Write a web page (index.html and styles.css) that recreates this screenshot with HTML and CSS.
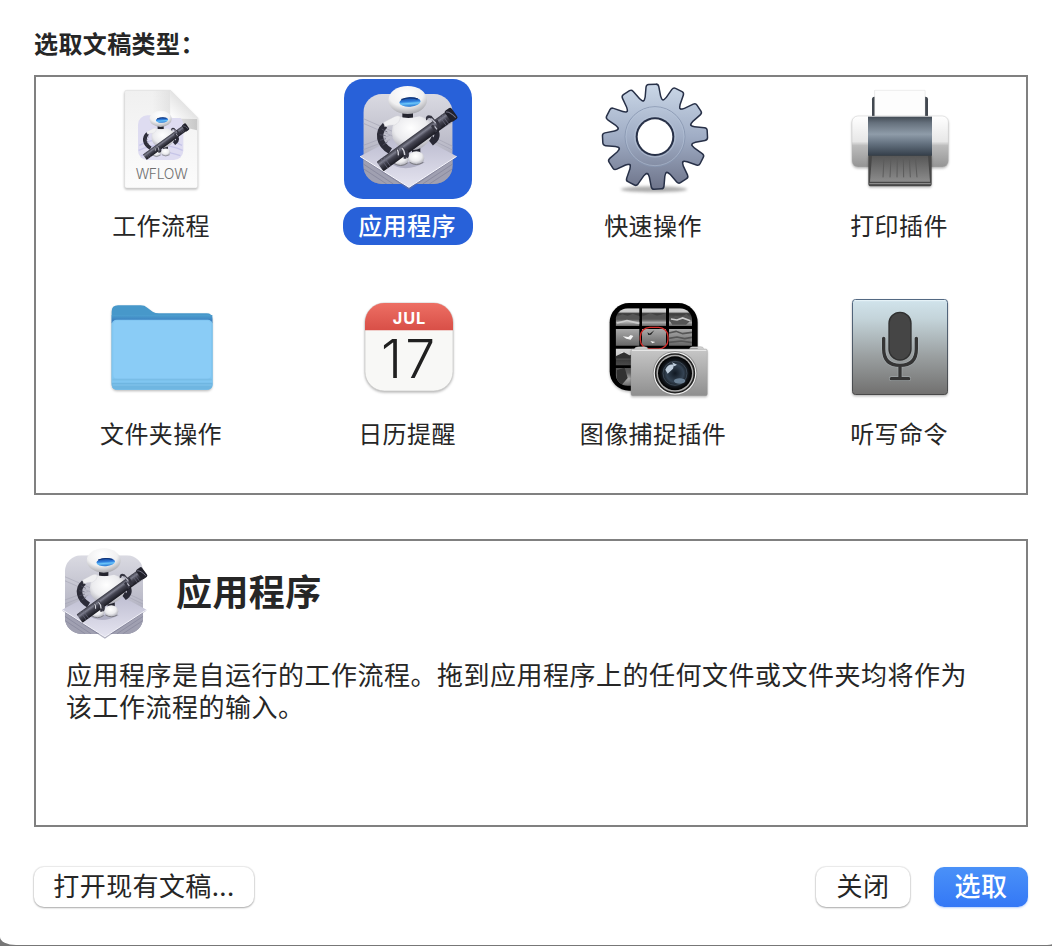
FILE: index.html
```html
<!DOCTYPE html>
<html lang="zh-CN">
<head>
<meta charset="utf-8">
<title>选取文稿类型</title>
<link rel="stylesheet" href="styles.css">
</head>
<body>
<svg class="defs" width="0" height="0" aria-hidden="true">
  <defs>
    <radialGradient id="head" cx=".45" cy=".28" r=".75"><stop offset="0" stop-color="#fff"/><stop offset=".6" stop-color="#f0f0f1"/><stop offset="1" stop-color="#a2a2a8"/></radialGradient>
    <radialGradient id="torso" cx=".45" cy=".35" r=".65"><stop offset="0" stop-color="#fff"/><stop offset=".6" stop-color="#ebebee"/><stop offset="1" stop-color="#adadb6"/></radialGradient>
    <linearGradient id="eye" x1="0" y1="0" x2="0" y2="1"><stop offset="0" stop-color="#14439c"/><stop offset=".45" stop-color="#2f80e0"/><stop offset=".65" stop-color="#6cc6fa"/><stop offset="1" stop-color="#2372cf"/></linearGradient>
    <linearGradient id="tube" x1="0" y1="0" x2="0" y2="1"><stop offset="0" stop-color="#34343f"/><stop offset=".28" stop-color="#7d7e8d"/><stop offset=".5" stop-color="#454552"/><stop offset="1" stop-color="#191921"/></linearGradient>
    <linearGradient id="room" x1="0" y1="0" x2="0" y2="1"><stop offset="0" stop-color="#dadae2"/><stop offset=".6" stop-color="#b9b9c7"/><stop offset="1" stop-color="#85859a"/></linearGradient>
    <linearGradient id="floor" x1="0" y1="0" x2="0" y2="1"><stop offset="0" stop-color="#b6b6cb"/><stop offset="1" stop-color="#e5e4f0"/></linearGradient>
    <clipPath id="roomClip"><rect x="100" y="72" width="268" height="270" rx="56"/></clipPath>
    <symbol id="figure" viewBox="0 0 480 400" overflow="visible">
      <path d="M217 122h32v22h-32z" fill="#24242e"/>
      <path d="M165 166C141 188 146 222 181 243" fill="none" stroke="#2c2c38" stroke-width="19"/>
      <path d="M155 177l17 9M149 194l18 3M150 211l18-5M158 226l15-11" stroke="#555566" stroke-width="2"/>
      <path d="M310 170q22 28 0 45l-16-20" fill="none" stroke="#292935" stroke-width="16"/>
      <path d="M207 233h27v26h-27zM246 232h25v25h-25z" fill="#262631"/>
      <ellipse cx="211" cy="267" rx="25" ry="20" fill="url(#torso)"/>
      <ellipse cx="259" cy="264" rx="24" ry="20" fill="url(#torso)"/>
      <path d="M190 279q22 15 43 0M239 277q20 13 41 0" fill="none" stroke="#77777f" stroke-width="3"/>
      <path d="M205 139q28 10 64 0 40 11 43 43-17 53-62 58-46 2-62-36-9-38 17-65z" fill="url(#torso)"/>
      <path d="M161 157l32-17q11-5 18 0-1 18-17 25-17-1-30 5z" fill="#f0f0f2" stroke="#c7c7ce"/>
      <ellipse cx="233" cy="90" rx="58" ry="42" fill="url(#head)"/>
      <ellipse cx="240" cy="96" rx="32" ry="14" fill="url(#eye)" transform="rotate(-4 240 96)"/>
      <path d="M214 89q22-10 49-2" fill="none" stroke="#123576" stroke-width="4"/>
      <g transform="rotate(-36 258 212)">
        <rect x="125" y="194" width="272" height="35" rx="3" fill="url(#tube)"/>
        <path d="M141 194v35M151 194v35M358 194v35M367 194v35" stroke="#6c6c80" stroke-width="2"/>
        <rect x="377" y="191" width="24" height="40" rx="6" fill="#21212b"/>
        <path d="M381 195q11 5 14 31" fill="none" stroke="#747486" stroke-width="3"/>
      </g>
      <path d="M202 238q4 10 1 24M215 232q10 10 10 34M225 240q13 9 5 23" fill="none" stroke="#373743" stroke-width="8"/>
      <path d="M202 239q4 7 3 17M215 233q9 8 9 22" fill="none" stroke="#d4d4dc" stroke-width="4"/>
      <path d="M292 150q-3-13 10-9l14 16M319 151l12 23M306 166l14 20" fill="none" stroke="#343440" stroke-width="8"/>
      <path d="M292 148l13-1 12 12M314 169l7 9" fill="none" stroke="#bdbdc9" stroke-width="4"/>
    </symbol>
    <symbol id="automator" viewBox="42 27 384 360">
      <g clip-path="url(#roomClip)">
        <path d="M100 72h268v270H100z" fill="url(#room)"/>
        <path d="M100 146l110 48M100 160l110 48M100 226l80-30M100 239l80-30M368 142l-80 50M368 156l-80 50M368 229l-70-34M368 240l-70-34" stroke="#a3a3b4" stroke-width="2"/>
        <path d="M100 264L235 354 368 264V342H100z" fill="#a0a0b1"/>
        <path d="M100 282L190 342M100 296L170 342M368 282L278 342M368 296L298 342" stroke="#818197" stroke-width="2"/>
      </g>
      <path d="M90 262L236 185 380 262 237 359z" fill="#73738e" opacity=".55"/>
      <path d="M90 259L236 182 380 259 237 352z" fill="url(#floor)"/>
      <path d="M90 259L237 352 380 259" fill="none" stroke="#fafaff" stroke-width="3"/>
      <path d="M175 275q46 38 110 2" fill="#9292aa" opacity=".55"/>
      <use href="#figure" width="480" height="400"/>
    </symbol>
  </defs>
</svg>

<main class="window">
  <h1 class="heading">选取文稿类型：</h1>

  <section class="types">
    <div class="type">
      <svg class="icon" viewBox="0 0 384 360">
        <defs>
          <linearGradient id="paper" x1="0" y1="0" x2="0" y2="1"><stop offset="0" stop-color="#f0f0f0"/><stop offset="1" stop-color="#fcfcfc"/></linearGradient>
          <linearGradient id="shade" x1="0" y1="0" x2="1" y2="0"><stop offset="0" stop-color="#bbb" stop-opacity="0"/><stop offset="1" stop-color="#aaa" stop-opacity=".6"/></linearGradient>
          <linearGradient id="fold" x1="0" y1="1" x2="1" y2="0"><stop offset="0" stop-color="#fff"/><stop offset=".5" stop-color="#e4e4e4"/><stop offset="1" stop-color="#ccc"/></linearGradient>
        </defs>
        <g transform="translate(-27 -27)">
          <path class="soft-shadow" d="M113 61H244L326 144V348q0 6-6 6H113q-6 0-6-6V67q0-6 6-6z" fill="url(#paper)" stroke="#d8d8d8" stroke-width="1.5"/>
          <path d="M190 62h54v84h80v35L190 150z" fill="url(#shade)"/>
          <rect x="147" y="136" width="136" height="134" rx="28" fill="#dedcf1"/>
          <path d="M151 226q63-34 128 0M149 241q65-30 132 0M157 257q57-23 117 0" fill="none" stroke="#c6c5e8" stroke-width="4"/>
          <path d="M244 61L326 144H252q-8 0-8-8z" fill="url(#fold)"/>
          <use href="#figure" width="480" height="400" transform="translate(81 95) scale(.575)"/>
          <text class="file-ext" x="218" y="328" textLength="156">WFLOW</text>
        </g>
      </svg>
      <span class="label">工作流程</span>
    </div>

    <div class="type selected">
      <svg class="icon"><use href="#automator"/></svg>
      <span class="label">应用程序</span>
    </div>

    <div class="type">
      <svg class="icon" viewBox="0 0 384 360">
        <defs>
          <linearGradient id="steel" x1="0" y1="0" x2="0" y2="1"><stop offset="0" stop-color="#cbd8e8"/><stop offset=".5" stop-color="#a0adc5"/><stop offset="1" stop-color="#6d7389"/></linearGradient>
          <path id="tooth" d="M-31-100Q-22-112-21-120L-17-149Q-16-155-11-155H11Q16-155 17-149L21-120Q22-112 31-100z"/>
          <g id="gearShape">
            <circle r="111"/>
            <use href="#tooth" transform="rotate(-3)"/><use href="#tooth" transform="rotate(27)"/><use href="#tooth" transform="rotate(57)"/><use href="#tooth" transform="rotate(87)"/><use href="#tooth" transform="rotate(117)"/><use href="#tooth" transform="rotate(147)"/><use href="#tooth" transform="rotate(177)"/><use href="#tooth" transform="rotate(207)"/><use href="#tooth" transform="rotate(237)"/><use href="#tooth" transform="rotate(267)"/><use href="#tooth" transform="rotate(297)"/><use href="#tooth" transform="rotate(327)"/>
          </g>
          <mask id="gearOuter" maskUnits="userSpaceOnUse" x="-170" y="-170" width="340" height="340"><use href="#gearShape" fill="#fff" stroke="#fff" stroke-width="9"/><circle r="52" fill="#000"/></mask>
          <mask id="gearInner" maskUnits="userSpaceOnUse" x="-170" y="-170" width="340" height="340"><use href="#gearShape" fill="#fff"/><circle r="58" fill="#000"/></mask>
        </defs>
        <ellipse class="blur" cx="192" cy="331" rx="100" ry="9" fill="#777" opacity=".6"/>
        <g transform="translate(195 173)">
          <rect x="-170" y="-170" width="340" height="340" fill="#273047" mask="url(#gearOuter)"/>
          <rect x="-160" y="-160" width="320" height="320" fill="url(#steel)" mask="url(#gearInner)"/>
          <circle r="90" fill="none" stroke="#8795b0" stroke-width="2.5"/>
          <circle r="87" fill="none" stroke="#b9c7db" stroke-width="1.5"/>
          <circle r="61" fill="none" stroke="#bac7d9" stroke-width="2"/>
        </g>
      </svg>
      <span class="label">快速操作</span>
    </div>

    <div class="type">
      <svg class="icon" viewBox="0 0 384 360">
        <defs>
          <linearGradient id="shell" x1="0" y1="0" x2="0" y2="1"><stop offset="0" stop-color="#fff"/><stop offset=".5" stop-color="#e7e7e7"/><stop offset=".58" stop-color="#bcbcbc"/><stop offset="1" stop-color="#949494"/></linearGradient>
          <linearGradient id="drum" x1="0" y1="0" x2="0" y2="1"><stop offset="0" stop-color="#424b55"/><stop offset=".16" stop-color="#66717d"/><stop offset=".45" stop-color="#8f9ca9"/><stop offset=".7" stop-color="#63707e"/><stop offset="1" stop-color="#343e49"/></linearGradient>
          <linearGradient id="tray" x1="0" y1="0" x2="0" y2="1"><stop offset="0" stop-color="#575757"/><stop offset="1" stop-color="#8c8c8c"/></linearGradient>
        </defs>
        <g transform="translate(12 3)">
          <path d="M96 58q0-8 7-8h153q8 0 8 8v55H96z" fill="#424850"/>
          <path class="paper-sheet" d="M104 31H255V111H104z" fill="#fdfdfd" stroke="#dedede"/>
          <rect class="soft-shadow" x="36" y="108" width="289" height="153" rx="18" fill="url(#shell)" stroke="#b6b6b6" stroke-width="1"/>
          <path class="soft-shadow" d="M85 225H275V311q0 8-8 8H93q-8 0-8-8z" fill="#484848"/>
          <path d="M96 228H264L270 305H90z" fill="url(#tray)"/>
          <path d="M132 230L129 292M153 230L150 292M172 230L171 292M190 230L191 292M208 230L211 292M226 230L231 292" stroke="#5c5c5c" stroke-width="3"/>
          <path d="M88 311H272" stroke="#999" stroke-width="3"/>
          <rect x="84" y="110" width="192" height="117" fill="url(#drum)"/>
        </g>
      </svg>
      <span class="label">打印插件</span>
    </div>

    <div class="type">
      <svg class="icon" viewBox="0 0 384 360">
        <defs>
          <linearGradient id="folderBack" x1="0" y1="0" x2="0" y2="1"><stop offset="0" stop-color="#4c9fcf"/><stop offset="1" stop-color="#3470b8"/></linearGradient>
        </defs>
        <g transform="translate(-9 9)">
          <path class="soft-shadow" d="M50 65q0-19 19-19h68q12 0 20 7l16 12q8 5 19 5h143q17 0 17 17V282q0 17-17 17H66q-16 0-16-17z" fill="#4798ca"/>
          <path d="M50 75H352V100H50z" fill="url(#folderBack)"/>
          <rect x="50" y="89" width="303" height="210" rx="15" fill="#80c6f1"/>
          <rect x="55" y="92" width="293" height="174" rx="12" fill="#8accf6"/>
          <path d="M52 269H351" stroke="#79bde7" stroke-width="5"/>
          <path d="M51 278H352V284q0 14-16 14H67q-16 0-16-14z" fill="#6fb6e1"/>
          <path d="M53 285H350" stroke="#83c4ec" stroke-width="3"/>
        </g>
      </svg>
      <span class="label">文件夹操作</span>
    </div>

    <div class="type">
      <svg class="icon" viewBox="0 0 384 360">
        <defs>
          <clipPath id="calClip"><rect x="45" y="39" width="264" height="264" rx="58"/></clipPath>
          <linearGradient id="calRed" x1="0" y1="0" x2="0" y2="1"><stop offset="0" stop-color="#ed6f64"/><stop offset="1" stop-color="#d84f47"/></linearGradient>
        </defs>
        <g transform="translate(18 9)">
          <rect class="soft-shadow" x="45" y="39" width="264" height="264" rx="58" fill="#f8f8f6" stroke="#c6c6c4" stroke-width="2"/>
          <path d="M45 39H309V121H45z" fill="url(#calRed)" clip-path="url(#calClip)"/>
          <text class="cal-month" x="177" y="101" textLength="98">JUL</text>
          <text class="cal-day" x="174" y="264" textLength="162">17</text>
        </g>
      </svg>
      <span class="label">日历提醒</span>
    </div>

    <div class="type">
      <svg class="icon" viewBox="0 0 384 360">
        <defs>
          <linearGradient id="photo" x1="0" y1="0" x2="0" y2="1"><stop offset="0" stop-color="#d8d8d8"/><stop offset=".2" stop-color="#c8c8c8"/><stop offset=".3" stop-color="#3b3b3b"/><stop offset=".65" stop-color="#606060"/><stop offset=".8" stop-color="#aaa"/><stop offset="1" stop-color="#666"/></linearGradient>
          <linearGradient id="sea" x1="0" y1="0" x2="0" y2="1"><stop offset="0" stop-color="#aaa"/><stop offset="1" stop-color="#686868"/></linearGradient>
          <linearGradient id="metal" x1="0" y1="0" x2="0" y2="1"><stop offset="0" stop-color="#c7c7c7"/><stop offset="1" stop-color="#8f8f8f"/></linearGradient>
          <radialGradient id="lens"><stop offset="0" stop-color="#101822"/><stop offset=".5" stop-color="#344353"/><stop offset=".8" stop-color="#101419"/><stop offset="1" stop-color="#000"/></radialGradient>
          <clipPath id="gridClip"><rect x="47" y="55" width="229" height="232" rx="36"/></clipPath>
        </defs>
        <g transform="translate(30 9)">
          <rect class="soft-shadow" x="29" y="39" width="264" height="263" rx="58" fill="#000"/>
          <g clip-path="url(#gridClip)">
            <path d="M47 55h71v53H47zM126 55h72v53h-72zM207 55h69v53h-69z" fill="url(#photo)"/>
            <path d="M47 117h71v50H47zM126 117h72v50h-72zM207 117h69v50h-69z" fill="url(#sea)"/>
            <path d="M47 176h71v50H47zM47 234h48v54H47z" fill="url(#photo)"/>
            <path d="M47 82l20-9 16 5 15-7 20 8v9H47zM126 80l25-11 20 8 27-7v16h-72zM208 91l18-14 18 4 15-10 17 17-18 16h-41z" fill="#555"/>
            <path d="M51 99l30-7 37 8M213 87l18 3 17-6 23 8" stroke="#ccc" stroke-width="5" fill="none"/>
            <path d="M68 139l17 2 7-6 8 3-8 11-13-3M151 153l15 3-9 4zM62 186l14 2-5 6z" fill="#f5f5f5"/>
            <path d="M207 129l21-5 20 7 28-4M207 145l24-4 23 5 22-4M207 157l37-4 32 5" stroke="#565656" stroke-width="5" fill="none"/>
            <path d="M47 199l25-12 16 9 30-8v18H47zM51 240l23-7 9 31-21 24H47z" fill="#323232"/>
            <path d="M142 127l7 4 14-10-10 13-8 1z" fill="#222"/>
          </g>
          <rect x="121" y="112" width="83" height="65" rx="28" fill="none" stroke="#d32d2a" stroke-width="4"/>
          <path d="M103 177q2-7 12-7h20q8 0 9 7M268 176q2-6 9-6h25q8 0 9 6" fill="#d2d2d2" stroke="#858585"/>
          <rect class="soft-shadow" x="93" y="177" width="229" height="140" rx="5" fill="url(#metal)" stroke="#999"/>
          <path d="M96 181H319" stroke="#eee" stroke-width="3"/>
          <circle cx="225" cy="250" r="67" fill="#909090"/>
          <circle cx="225" cy="250" r="64" fill="#f0f0f0"/>
          <circle cx="225" cy="250" r="58" fill="#aaa" stroke="#232323" stroke-width="5"/>
          <circle cx="225" cy="250" r="51" fill="url(#lens)"/>
          <circle cx="225" cy="250" r="36" fill="none" stroke="#4b5a69" stroke-width="2"/>
          <path d="M196 239q7-18 26-15l-3 12-16 15zM216 217l15 7-8 5z" fill="#c0cfde"/>
          <ellipse cx="239" cy="273" rx="17" ry="8" fill="#7991a7" opacity=".8"/>
        </g>
      </svg>
      <span class="label">图像捕捉插件</span>
    </div>

    <div class="type">
      <svg class="icon" viewBox="0 0 384 360">
        <defs>
          <linearGradient id="plate" x1="0" y1="0" x2="0" y2="1"><stop offset="0" stop-color="#d1e4ec"/><stop offset=".2" stop-color="#c4d4da"/><stop offset=".6" stop-color="#9a9fa0"/><stop offset="1" stop-color="#71706f"/></linearGradient>
          <linearGradient id="plateEdge" x1="0" y1="0" x2="0" y2="1"><stop offset="0" stop-color="#536983"/><stop offset="1" stop-color="#494949"/></linearGradient>
        </defs>
        <g transform="translate(12 9)">
          <rect class="soft-shadow" x="37.500" y="28.500" width="285" height="285" rx="9" fill="url(#plate)" stroke="url(#plateEdge)" stroke-width="3"/>
          <path d="M43 32H317" stroke="#e9f5fa" stroke-width="3"/>
          <g stroke="#bbc5ca" fill="none" stroke-linecap="round" opacity=".5"><path d="M131 145V177q0 49 49 49t49-49V145M180 228V263M154 266H206" stroke-width="14"/></g>
          <rect x="147" y="67" width="66" height="143" rx="33" fill="#454545" stroke="#303030" stroke-width="4"/>
          <path d="M131 145V177q0 49 49 49t49-49V145M180 228V263M154 266H206" fill="none" stroke="#353535" stroke-width="10" stroke-linecap="round"/>
        </g>
      </svg>
      <span class="label">听写命令</span>
    </div>
  </section>

  <section class="details">
    <header class="details-head">
      <svg class="details-icon"><use href="#automator"/></svg>
      <h2 class="details-title">应用程序</h2>
    </header>
    <p class="description">应用程序是自运行的工作流程。拖到应用程序上的任何文件或文件夹均将作为该工作流程的输入。</p>
  </section>

  <footer class="actions">
    <button class="button open">打开现有文稿...</button>
    <button class="button close">关闭</button>
    <button class="button primary">选取</button>
  </footer>
</main>
</body>
</html>
```
FILE: styles.css
```css
* { box-sizing: border-box; }

body {
  margin: 0;
  height: 946px;
  overflow: hidden;
  background: #777;
  color: #262626;
  font-family: "Noto Sans CJK SC", sans-serif;
}

.defs { position: absolute; }

.window {
  display: flex;
  flex-direction: column;
  height: 945px;
  padding: 0 24px 0 34px;
  background: #fff;
  border-radius: 0 0 8px 16px / 0 0 1px 8px;
}

.heading {
  height: 75px;
  margin: 0;
  padding-top: 25px;
  font-size: 24px;
  font-weight: 700;
  line-height: 36px;
  letter-spacing: .4px;
}

.types {
  display: grid;
  grid-template-columns: repeat(4, 246px);
  grid-auto-rows: 208px;
  height: 420px;
  padding: 2px 0 0 3px;
  border: 2px solid #808080;
}

.type {
  display: flex;
  flex-direction: column;
  align-items: center;
  gap: 8px;
}

.icon {
  width: 128px;
  height: 120px;
  border-radius: 19px;
}

.label {
  height: 38px;
  padding: 0 17px 0 15px;
  border-radius: 17px;
  font-size: 24px;
  line-height: 36px;
  letter-spacing: .4px;
  white-space: nowrap;
}

.selected .icon, .selected .label { background: #2861d9; }
.selected .label { color: #fff; font-weight: 500; }

.soft-shadow { filter: drop-shadow(0 4px 3px rgba(0, 0, 0, .28)); }
.paper-sheet { filter: drop-shadow(0 0 2px rgba(0, 0, 0, .15)); }
.blur { filter: blur(5px); }

.file-ext {
  fill: #707070;
  font: 300 42px Inter, sans-serif;
  text-anchor: middle;
}

.cal-month {
  fill: #fff;
  font: 700 49px Inter, sans-serif;
  text-anchor: middle;
}

.cal-day {
  fill: #202020;
  font: 300 160px Inter, sans-serif;
  text-anchor: middle;
}

.details {
  height: 288px;
  margin-top: 44px;
  border: 2px solid #808080;
}

.details-head {
  display: flex;
  height: 117px;
  padding: 1px 0 0 12px;
}

.details-icon { width: 112px; height: 105px; }

.details-title {
  margin: 21px 0 0 16px;
  font-size: 36px;
  font-weight: 700;
  line-height: 54px;
  letter-spacing: .4px;
}

.description {
  width: 915px;
  margin: 0 0 0 30px;
  font-size: 26px;
  line-height: 32px;
  letter-spacing: .5px;
}

.actions {
  display: flex;
  margin-top: 40px;
}

.button {
  height: 40px;
  padding: 0 0 4px;
  border: 0;
  border-radius: 10px;
  background: #fff;
  box-shadow: 0 0 1px 1px rgba(0, 0, 0, .08), 0 1px 2px rgba(0, 0, 0, .28);
  color: #262626;
  font: 26px/36px "Noto Sans CJK SC", sans-serif;
  letter-spacing: .4px;
}

.open { width: 220px; }
.close { width: 94px; margin-left: auto; }

.primary {
  width: 94px;
  margin-left: 24px;
  background: linear-gradient(#4a91f8, #3478f6);
  box-shadow: 0 1px 2px rgba(52, 120, 246, .35);
  color: #fff;
  font-weight: 500;
}
```
